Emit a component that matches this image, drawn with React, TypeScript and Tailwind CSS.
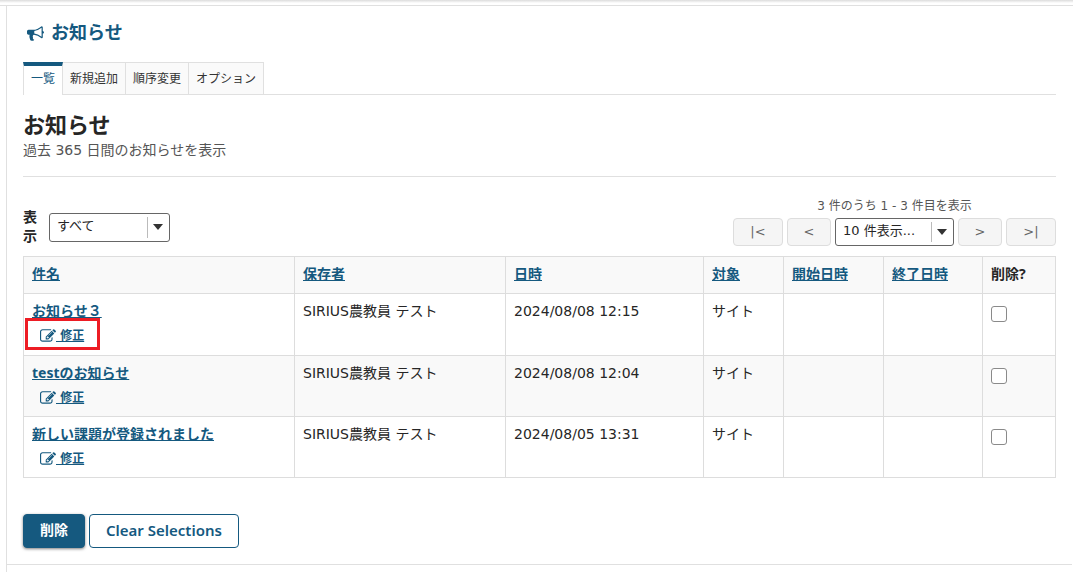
import React from "react";

const font =
  "font-['DejaVu_Sans','Noto_Sans_CJK_JP',sans-serif]";
const boldFont =
  "font-['Noto_Sans','Noto_Sans_CJK_JP',sans-serif]";

function BullhornIcon() {
  return (
    <svg viewBox="0 0 1792 1792" className="mt-[2px] size-[17px] fill-current" aria-hidden="true">
      <path d="M1664 640q53 0 90.5 37.5t37.5 90.5-37.5 90.5-90.5 37.5v384q0 52-38 90t-90 38q-417-347-812-380-58 19-91 66t-31 100.5 40 92.5q-20 33-23 65.5t6 58 33.5 55 48 50 61.5 50.5q-29 58-111.5 83t-168.5 11.5-132-55.5q-7-23-29.5-87.5t-32-94.5-23-89-15-101 3.5-98.5 22-110.5h-122q-66 0-113-47t-47-113v-192q0-66 47-113t113-47h480q435 0 896-384 52 0 90 38t38 90v384zm-128 604v-954q-394 302-768 343v270q377 42 768 341z" />
    </svg>
  );
}

function EditIcon() {
  return (
    <svg viewBox="0 0 1792 1792" className="size-4 fill-current" aria-hidden="true">
      <path d="M888 1184l116-116-152-152-116 116v56h96v96h56zm440-720q-16-16-33 1l-350 350q-17 17-1 33t33-1l350-350q17-17 1-33zm80 594v190q0 119-84.5 203.5t-203.5 84.5h-832q-119 0-203.5-84.5t-84.5-203.5v-832q0-119 84.5-203.5t203.5-84.5h832q63 0 117 25 15 7 18 23 3 17-9 29l-49 49q-14 14-32 8-23-6-45-6h-832q-66 0-113 47t-47 113v832q0 66 47 113t113 47h832q66 0 113-47t47-113v-126q0-13 9-22l64-64q15-15 35-7t20 29zm-96-738l288 288-672 672h-288v-288zm444 132l-92 92-288-288 92-92q28-28 68-28t68 28l152 152q28 28 28 68t-28 68z" />
    </svg>
  );
}

const tabs = ["新規追加", "順序変更", "オプション"];

const columns = [
  { label: "件名", width: "" },
  { label: "保存者", width: "w-[211px]" },
  { label: "日時", width: "w-[198px]" },
  { label: "対象", width: "w-[80px]" },
  { label: "開始日時", width: "w-[100px]" },
  { label: "終了日時", width: "w-[99px]" },
];

const rows = [
  { title: "お知らせ３", date: "2024/08/08 12:15", marked: true },
  { title: "testのお知らせ", date: "2024/08/08 12:04", marked: false },
  { title: "新しい課題が登録されました", date: "2024/08/05 13:31", marked: false },
];

function Select({
  id,
  label,
  options,
  className,
}: {
  id: string;
  label?: string;
  options: string[];
  className: string;
}) {
  return (
    <div className={`relative ${className}`}>
      <select
        id={id}
        aria-label={label}
        className="h-full w-full appearance-none rounded-[3px] border border-[#666] bg-white pr-7 pb-px pl-[7px] text-[13px] text-[#262626]"
      >
        {options.map((o) => (
          <option key={o}>{o}</option>
        ))}
      </select>
      <span className="pointer-events-none absolute inset-y-1 right-[7px] flex items-center gap-[5px]">
        <span className="h-full w-px bg-[#bbb]" />
        <svg viewBox="0 0 10 6" className="h-[6px] w-[10px] fill-[#333]" aria-hidden="true">
          <path d="M0 0h10L5 6z" />
        </svg>
      </span>
    </div>
  );
}

function PagerButton({ label, text, className }: { label: string; text: string; className: string }) {
  return (
    <button
      type="button"
      disabled
      aria-label={label}
      className={`h-7 rounded border border-[#ddd] bg-[#f5f5f5] pb-px text-[13px] leading-5 text-[#666] ${className}`}
    >
      {text}
    </button>
  );
}

export default function App() {
  return (
    <div className={`min-h-screen bg-white text-sm text-[#262626] ${font}`}>
      <div className="h-[5px] bg-linear-to-b from-[#dcdcdc] to-white to-60%" />
      <div className="border-t border-[#e0e0e0]">
        <main className="mr-px ml-[6px] border-l border-[#e0e0e0]">
          <div className="px-4 pt-[14px] pb-4">
            <h1 className="flex items-center gap-[7px] pl-1 text-lg leading-6 font-bold text-[#15597f]">
              <BullhornIcon />
              <a href="#top" className={boldFont}>お知らせ</a>
            </h1>

            <nav className="mt-[18px] flex h-[33px] border-b border-[#e0e0e0] text-xs leading-5">
              <a
                href="#list"
                className="-mb-px border-t-4 border-r border-l border-t-[#15597f] border-r-[#e0e0e0] border-l-[#e0e0e0] bg-white px-[7px] pt-[3px] text-[#15597f]"
              >
                一覧
              </a>
              {tabs.map((t) => (
                <a
                  key={t}
                  href="#tab"
                  className="border-t border-r border-[#e0e0e0] bg-[#fafafa] px-[7px] pt-[6px] text-[#333]"
                >
                  {t}
                </a>
              ))}
            </nav>

            <h2 className={`mt-[15px] text-[22px] leading-7 font-bold ${boldFont}`}>お知らせ</h2>
            <p className="mt-px leading-[22px] text-[#555]">過去 365 日間のお知らせを表示</p>
            <hr className="mt-[15px] border-[#e0e0e0]" />

            <div className="mt-5 flex items-end justify-between">
              <div className="flex items-center gap-3">
                <label htmlFor="view" className="w-[14px] leading-[19px] font-bold">
                  表示
                </label>
                <Select id="view" options={["すべて"]} className="h-[29px] w-[121px]" />
              </div>
              <div className="text-center">
                <div className="text-xs leading-[18px] text-[#555]">3 件のうち 1 - 3 件目を表示</div>
                <div className="mt-[3px] flex gap-1">
                  <PagerButton label="最初" text="|<" className="w-[50px]" />
                  <PagerButton label="前" text="<" className="w-11" />
                  <Select id="size" label="表示件数" options={["10 件表示..."]} className="h-7 w-[119px]" />
                  <PagerButton label="次" text=">" className="w-11" />
                  <PagerButton label="最後" text=">|" className="w-[50px]" />
                </div>
              </div>
            </div>

            <table className="mt-[10px] w-full table-fixed border-collapse text-left [&_td]:border [&_td]:border-[#ddd] [&_td]:px-2 [&_td]:pt-[7px] [&_td]:align-top [&_th]:border [&_th]:border-[#ddd] [&_th]:px-2 [&_th]:pt-[7px] [&_th]:pb-[9px]">
              <thead>
                <tr className="bg-[#f9f9f9] leading-5">
                  {columns.map((c) => (
                    <th key={c.label} className={c.width}>
                      <a href="#sort" className="font-bold text-[#15597f] underline">{c.label}</a>
                    </th>
                  ))}
                  <th className={`w-[73px] ${boldFont}`}>削除?</th>
                </tr>
              </thead>
              <tbody>
                {rows.map((r) => (
                  <tr key={r.title} className="leading-5 even:bg-[#f9f9f9]">
                    <td className={r.marked ? "pb-px" : ""}>
                      <a href="#item" className={`block w-fit font-bold text-[#15597f] underline ${boldFont}`}>
                        {r.title}
                      </a>
                      <div className="relative mt-[5px] mb-2 w-fit pl-2 text-xs leading-5 font-bold text-[#15597f]">
                        <a href="#edit" className="flex items-center">
                          <EditIcon />
                          <span className="whitespace-pre underline"> 修正</span>
                        </a>
                        {r.marked && (
                          <span className="pointer-events-none absolute -top-2 -right-4 -bottom-1 -left-[7px] border-3 border-[#ed1c24]" />
                        )}
                      </div>
                    </td>
                    <td>SIRIUS農教員 テスト</td>
                    <td>{r.date}</td>
                    <td>サイト</td>
                    <td></td>
                    <td></td>
                    <td>
                      <input
                        type="checkbox"
                        aria-label={`${r.title}を削除`}
                        className="mt-[5px] block size-4 appearance-none rounded-[3px] border border-[#8a8a8a] bg-white checked:bg-[#15597f]"
                      />
                    </td>
                  </tr>
                ))}
              </tbody>
            </table>

            <div className={`mt-9 flex gap-1 leading-5 font-semibold ${boldFont}`}>
              <button
                type="button"
                className="h-[34px] rounded border border-[#15597f] bg-[#15597f] px-4 pb-[2px] font-bold text-white shadow-[0_1px_3px_rgba(0,0,0,0.5)]"
              >
                削除
              </button>
              <button
                type="button"
                className="h-[34px] rounded border border-[#15597f] bg-white px-4 pb-[3px] text-[15px] text-[#15597f]"
              >
                Clear Selections
              </button>
            </div>
          </div>
          <hr className="border-[#e0e0e0]" />
          <div className="h-[7px]" />
        </main>
      </div>
    </div>
  );
}
